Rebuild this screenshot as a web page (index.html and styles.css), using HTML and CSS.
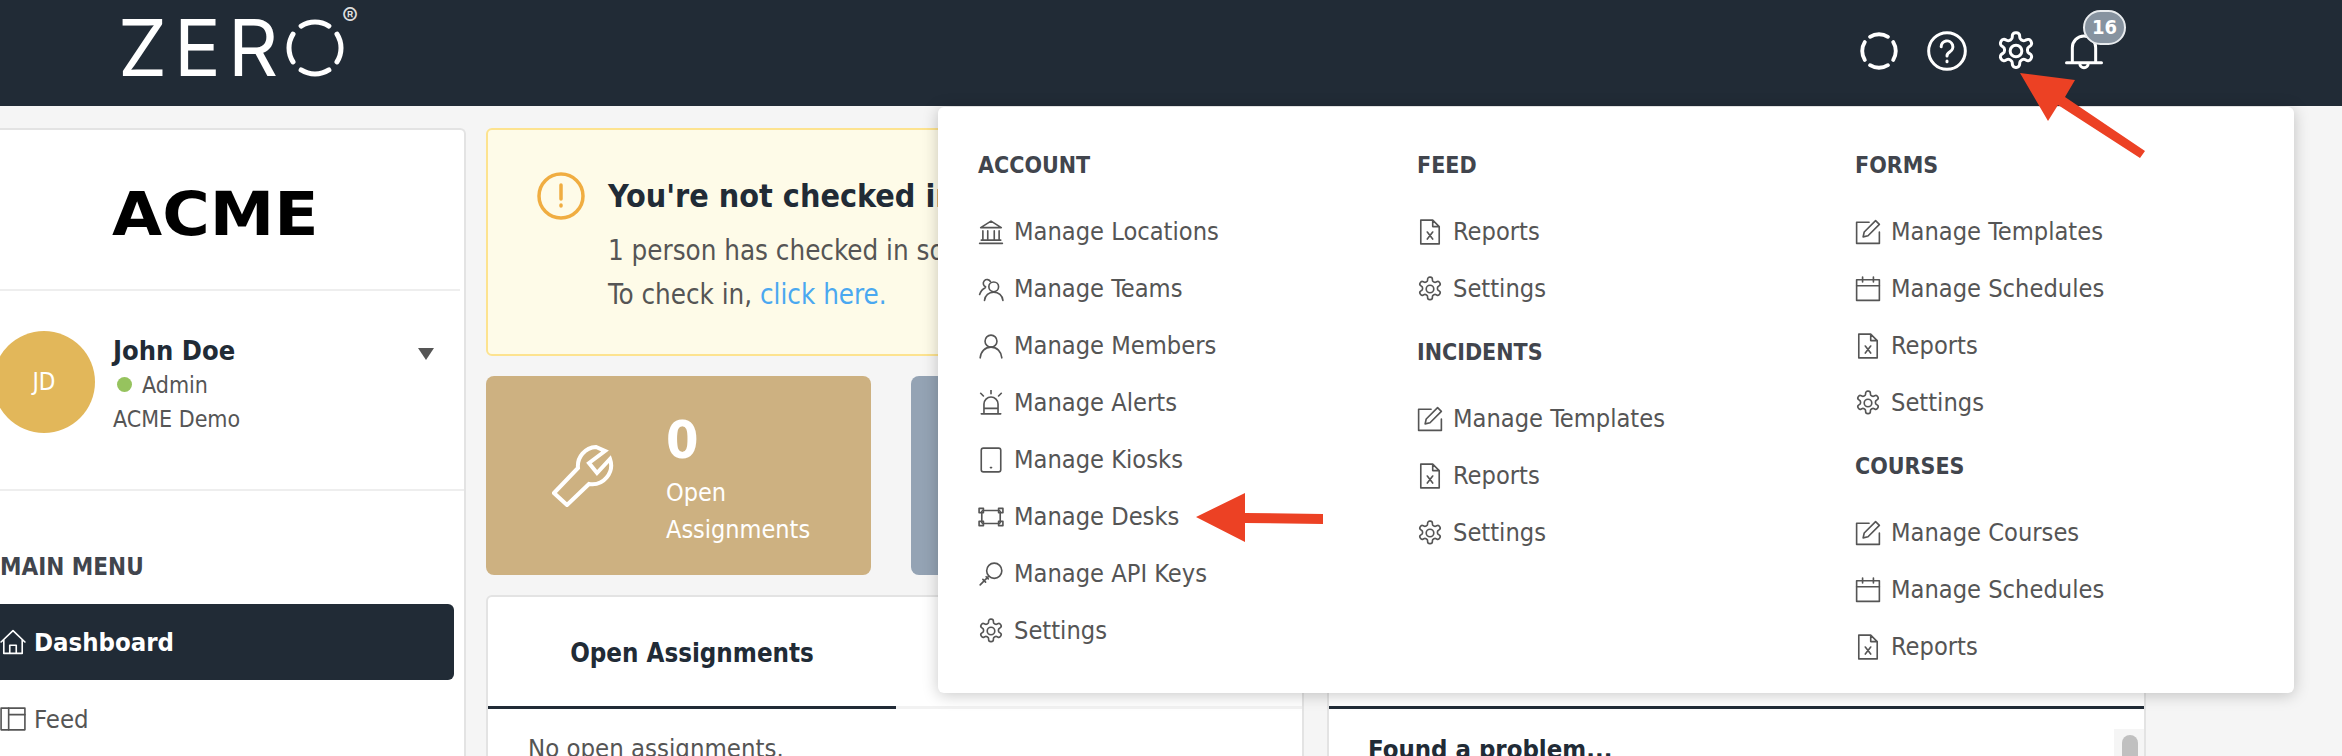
FILE: index.html
```html
<!DOCTYPE html>
<html lang="en">
<head>
	<meta charset="UTF-8">
	<meta name="viewport" content="width=device-width, initial-scale=1.0">
	<title>ZERO Dashboard</title>
	<link rel="stylesheet" href="styles.css">
</head>
<body>
	<svg class="sprite" width="0" height="0">
		<symbol id="i-bank" viewBox="0 0 24 24"><path d="M2.5 8 12 2l9.500 6zM4.500 11v8M9 11v8M15 11v8M19.500 11v8M3 19.500h18M1.500 22.500h21"/></symbol>
		<symbol id="i-team" viewBox="0 0 24 24"><circle cx="14.500" cy="10" r="4.500"/><path d="M6 22.500c.5-4.500 4-7.500 8.500-7.500s8 3 8.500 7.500M11.500 5.200a3.500 3.500 0 1 0-4.500 4.800M6.500 11c-2.500 1-4 3-5 6"/></symbol>
		<symbol id="i-person" viewBox="0 0 24 24"><circle cx="12" cy="7.500" r="5.500"/><path d="M2 23c.5-6 4.500-10 10-10s9.500 4 10 10"/></symbol>
		<symbol id="i-alert" viewBox="0 0 24 24"><path d="M5.500 21v-8a6.500 6.500 0 0 1 13 0v8M3 22h18M12 0v3.500M2.500 3l2.500 2.500M21.500 3 19 5.500M5.500 17h13"/></symbol>
		<symbol id="i-kiosk" viewBox="0 0 24 24"><rect x="3" y="1" width="18" height="22" rx="2"/><path d="M11.500 19h1"/></symbol>
		<symbol id="i-desk" viewBox="0 0 24 24"><path d="M4 6h16M4 18h16M3.500 7v10M20.500 7v10"/><rect x="1" y="4" width="4" height="4"/><rect x="19" y="4" width="4" height="4"/><rect x="1" y="16" width="4" height="4"/><rect x="19" y="16" width="4" height="4"/></symbol>
		<symbol id="i-key" viewBox="0 0 24 24"><circle cx="15" cy="9" r="7"/><path d="M10 14 2 22M4.500 17l2.500 2.500M7.500 14.500l2 2"/></symbol>
		<symbol id="i-gear" viewBox="0 0 24 24"><path d="M12.220 1h-.44a2 2 0 0 0-2 2v.6a2 2 0 0 1-1 1.730l-.43.250a2 2 0 0 1-2 0l-.5-.28a2 2 0 0 0-2.730.730l-.22.380a2 2 0 0 0 .730 2.730l.5.300a2 2 0 0 1 1 1.720v.51a2 2 0 0 1-1 1.740l-.5.290a2 2 0 0 0-.730 2.730l.22.380a2 2 0 0 0 2.730.730l.5-.28a2 2 0 0 1 2 0l.43.250a2 2 0 0 1 1 1.730v.6a2 2 0 0 0 2 2h.44a2 2 0 0 0 2-2v-.6a2 2 0 0 1 1-1.730l.43-.25a2 2 0 0 1 2 0l.5.280a2 2 0 0 0 2.730-.730l.22-.39a2 2 0 0 0-.730-2.730l-.5-.28a2 2 0 0 1-1-1.740v-.5a2 2 0 0 1 1-1.740l.5-.29a2 2 0 0 0 .730-2.730l-.22-.38a2 2 0 0 0-2.730-.730l-.5.280a2 2 0 0 1-2 0l-.43-.25a2 2 0 0 1-1-1.730V3a2 2 0 0 0-2-2z"/><circle cx="12" cy="12" r="3.500"/></symbol>
		<symbol id="i-file" viewBox="0 0 24 24"><path d="M3.500 1h11l6 6v16h-17zM14.500 1v6h6M9.500 12l5 6.500M14.500 12l-5 6.500"/></symbol>
		<symbol id="i-edit" viewBox="0 0 24 24"><path d="M22.500 12v10.500h-21V3H13M19 1.500l3.500 3.500L12 15.500l-4.500 1 1-4.500z"/></symbol>
		<symbol id="i-calendar" viewBox="0 0 24 24"><rect x="1.500" y="3.500" width="21" height="19"/><path d="M1.500 9h21M7 1v4.500M17 1v4.500"/></symbol>
		<symbol id="i-house" viewBox="0 0 24 24"><path d="M1 12 12 1.500 23 12M3.500 10v12.500h17V10M9 22.500V15h6v7.500"/></symbol>
		<symbol id="i-layout" viewBox="0 0 24 24"><rect x="1" y="2" width="22" height="20"/><path d="M8 2v20M8 8h15"/></symbol>
		<symbol id="i-ring" viewBox="0 0 62 62"><circle cx="31" cy="31" r="26" pathLength="100" stroke-dasharray="18 7" stroke-dashoffset="9"/></symbol>
	</svg>

	<header class="topbar">
		<div class="logo">
			<span class="logo-text">ZER</span>
			<svg class="logo-ring"><use href="#i-ring"/></svg>
			<span class="logo-reg">®</span>
		</div>
		<div class="top-icons">
			<svg class="top-icon top-ring"><use href="#i-ring"/></svg>
			<svg class="top-icon" viewBox="0 0 24 24"><circle cx="12" cy="12" r="11"/><path d="M8.500 9.500a3.500 3.500 0 1 1 5.200 3c-1.200.7-1.700 1.300-1.700 2.500M12 18v.5"/></svg>
			<svg class="top-icon"><use href="#i-gear"/></svg>
			<div class="bell">
				<svg class="top-icon" viewBox="0 0 24 24"><path d="M5 18V10a7 7 0 0 1 14 0v8M1.500 19h21M9.500 19.500a2.500 2.500 0 0 0 5 0"/></svg>
				<span class="badge">16</span>
			</div>
		</div>
	</header>

	<div class="layout">
		<aside class="sidebar">
			<div class="brand"><span class="brand-text">ACME</span></div>
			<div class="profile">
				<div class="avatar">JD</div>
				<div class="who">
					<div class="who-name">John Doe</div>
					<div class="who-role"><span class="dot"></span>Admin</div>
					<div>ACME Demo</div>
				</div>
				<span class="caret"></span>
			</div>
			<nav class="side-nav">
				<div class="side-title">MAIN MENU</div>
				<a class="side-link active"><svg class="ico"><use href="#i-house"/></svg>Dashboard</a>
				<a class="side-link"><svg class="ico"><use href="#i-layout"/></svg>Feed</a>
			</nav>
		</aside>

		<main class="main">
			<section class="notice">
				<svg class="notice-icon" viewBox="0 0 48 48"><circle cx="24" cy="24" r="22"/><path d="M24 13v14M24 33v1"/></svg>
				<div class="notice-body">
					<h2 class="notice-title">You're not checked in</h2>
					<p class="notice-text">1 person has checked in so</p>
					<p class="notice-text">To check in, <a class="link">click here.</a></p>
				</div>
			</section>

			<section class="stats">
				<div class="stat stat-tan">
					<svg class="stat-icon" viewBox="0 0 62 62"><path d="M2 48 26 23A19 19 0 0 1 44 2L53 6 37 18 45 28 58 14A19 19 0 0 1 37 39L15 60Z"/></svg>
					<div class="stat-text">
						<div class="stat-num">0</div>
						<div class="stat-label">Open<br>Assignments</div>
					</div>
				</div>
				<div class="stat stat-blue"></div>
			</section>

			<section class="panels">
				<div class="panel">
					<div class="tabs"><div class="tab">Open Assignments</div></div>
					<div class="panel-body">No open assignments.</div>
				</div>
				<div class="panel">
					<div class="tabs tabs-dark"></div>
					<div class="panel-body panel-scroll">
						<strong class="panel-strong">Found a problem...</strong>
						<div class="scroll"><span class="thumb"></span></div>
					</div>
				</div>
			</section>
		</main>
	</div>

	<div class="dropdown">
		<div class="drop-col">
			<h3 class="drop-title">ACCOUNT</h3>
			<a class="drop-link"><svg class="ico"><use href="#i-bank"/></svg>Manage Locations</a>
			<a class="drop-link"><svg class="ico"><use href="#i-team"/></svg>Manage Teams</a>
			<a class="drop-link"><svg class="ico"><use href="#i-person"/></svg>Manage Members</a>
			<a class="drop-link"><svg class="ico"><use href="#i-alert"/></svg>Manage Alerts</a>
			<a class="drop-link"><svg class="ico"><use href="#i-kiosk"/></svg>Manage Kiosks</a>
			<a class="drop-link"><svg class="ico"><use href="#i-desk"/></svg>Manage Desks</a>
			<a class="drop-link"><svg class="ico"><use href="#i-key"/></svg>Manage API Keys</a>
			<a class="drop-link"><svg class="ico"><use href="#i-gear"/></svg>Settings</a>
		</div>
		<div class="drop-col">
			<h3 class="drop-title">FEED</h3>
			<a class="drop-link"><svg class="ico"><use href="#i-file"/></svg>Reports</a>
			<a class="drop-link"><svg class="ico"><use href="#i-gear"/></svg>Settings</a>
			<h3 class="drop-title drop-next">INCIDENTS</h3>
			<a class="drop-link"><svg class="ico"><use href="#i-edit"/></svg>Manage Templates</a>
			<a class="drop-link"><svg class="ico"><use href="#i-file"/></svg>Reports</a>
			<a class="drop-link"><svg class="ico"><use href="#i-gear"/></svg>Settings</a>
		</div>
		<div class="drop-col">
			<h3 class="drop-title">FORMS</h3>
			<a class="drop-link"><svg class="ico"><use href="#i-edit"/></svg>Manage Templates</a>
			<a class="drop-link"><svg class="ico"><use href="#i-calendar"/></svg>Manage Schedules</a>
			<a class="drop-link"><svg class="ico"><use href="#i-file"/></svg>Reports</a>
			<a class="drop-link"><svg class="ico"><use href="#i-gear"/></svg>Settings</a>
			<h3 class="drop-title drop-next">COURSES</h3>
			<a class="drop-link"><svg class="ico"><use href="#i-edit"/></svg>Manage Courses</a>
			<a class="drop-link"><svg class="ico"><use href="#i-calendar"/></svg>Manage Schedules</a>
			<a class="drop-link"><svg class="ico"><use href="#i-file"/></svg>Reports</a>
		</div>
	</div>

	<svg class="marks" viewBox="0 0 2342 756">
		<polygon points="2020,73 2075,80 2065,97 2145,151 2140,158 2058,105 2048,121"/>
		<polygon points="1196,517 1245,493 1245,513 1323,514 1323,524 1245,523 1245,542"/>
	</svg>
</body>
</html>
```

FILE: styles.css
```css
* {
	box-sizing: border-box;
}
body {
	margin: 0;
	height: 756px;
	overflow: hidden;
	background: #f5f5f5;
	color: #555;
	font-family: "DejaVu Sans Condensed", "DejaVu Sans", sans-serif;
	font-size: 25px;
	position: relative;
}
.sprite {
	position: absolute;
}
symbol {
	overflow: visible;
}

/* top bar */
.topbar {
	height: 106px;
	background: #212b36;
	display: flex;
	align-items: center;
	justify-content: space-between;
	padding: 0 238px 0 118px;
}
.logo {
	display: flex;
	align-items: center;
	position: relative;
	height: 106px;
	margin-top: -10px;
}
.logo-text {
	font-family: Inter, sans-serif;
	font-weight: 400;
	font-size: 78px;
	color: #fff;
	letter-spacing: 7px;
	line-height: 1;
}
.logo-ring {
	width: 62px;
	height: 62px;
	fill: none;
	stroke: #fff;
	stroke-width: 5;
	stroke-linecap: round;
	margin-left: -1px;
}
.logo-reg {
	position: absolute;
	left: 224px;
	top: 10px;
	color: #ddd;
	font-family: Inter, sans-serif;
	font-size: 24px;
	line-height: 1;
}
.top-icons {
	display: flex;
	align-items: center;
	gap: 28.500px;
	margin-top: -4px;
}
.top-icon {
	width: 40px;
	height: 40px;
	fill: none;
	stroke: #fff;
	stroke-width: 1.800;
	stroke-linecap: round;
	stroke-linejoin: round;
}
.top-ring {
	stroke-width: 6;
}
.bell {
	position: relative;
	display: flex;
}
.badge {
	position: absolute;
	left: 19px;
	top: -21px;
	width: 43px;
	height: 35px;
	border-radius: 18px;
	border: 2px solid #e8ebee;
	background: #8793a0;
	color: #fff;
	font-weight: bold;
	font-size: 20px;
	line-height: 31px;
	text-align: center;
}

/* page layout */
.layout {
	display: flex;
	gap: 20px;
	margin-left: -24px;
	padding-top: 22px;
	height: 650px;
}
.sidebar {
	width: 490px;
	flex: none;
	background: #fff;
	border: 2px solid #e3e3e3;
	border-bottom: 0;
	border-radius: 6px 6px 0 0;
}
.brand {
	height: 161px;
	margin-right: 4px;
	border-bottom: 2px solid #eee;
	display: flex;
	align-items: center;
	padding-left: 134px;
}
.brand-text {
	font-family: "DejaVu Sans", sans-serif;
	font-weight: bold;
	font-size: 60px;
	color: #000;
	line-height: 1;
	margin-top: 9px;
	transform: scaleX(1.08);
	transform-origin: left center;
}
.profile {
	height: 200px;
	border-bottom: 2px solid #eee;
	display: flex;
	align-items: center;
	padding: 0 30px 0 15px;
	gap: 18px;
}
.avatar {
	width: 102px;
	height: 102px;
	border-radius: 50%;
	background: #e2b75a;
	color: #fff;
	font-size: 24px;
	display: flex;
	align-items: center;
	justify-content: center;
	flex: none;
	margin-top: -17px;
}
.who {
	flex: 1;
	font-size: 23px;
	line-height: 34px;
	margin-top: -11px;
}
.who-name {
	font-weight: bold;
	font-size: 27px;
	color: #212b36;
}
.who-role {
	display: flex;
	align-items: center;
	gap: 10px;
	padding-left: 4px;
}
.dot {
	width: 15px;
	height: 15px;
	border-radius: 50%;
	background: #96c35e;
}
.caret {
	width: 0;
	height: 0;
	border-left: 8px solid transparent;
	border-right: 8px solid transparent;
	border-top: 12px solid #555;
	margin-top: -72px;
}
.side-nav {
	padding: 61px 10px 0 22px;
}
.side-title {
	font-weight: bold;
	font-size: 24px;
	color: #41454d;
	line-height: 30px;
	margin-bottom: 22px;
}
.side-link {
	display: flex;
	align-items: center;
	gap: 8px;
	height: 77px;
	font-size: 25.500px;
}
.active {
	height: 76px;
	margin-left: -22px;
	padding-left: 22px;
	background: #212b36;
	color: #fff;
	font-weight: bold;
	border-radius: 6px;
}

/* main column */
.main {
	width: 1660px;
	flex: none;
	display: flex;
	flex-direction: column;
	gap: 20px;
}
.notice {
	height: 228px;
	flex: none;
	background: #fefbe8;
	border: 2px solid #fde38f;
	border-radius: 6px;
	display: flex;
	gap: 23px;
	padding: 42px 0 0 49px;
}
.notice-icon {
	width: 48px;
	height: 48px;
	flex: none;
	fill: none;
	stroke: #f0ad41;
	stroke-width: 3.500;
	stroke-linecap: round;
}
.notice-body {
	white-space: nowrap;
}
.notice-title {
	margin: 0 0 8px;
	font-size: 32px;
	line-height: 48px;
	color: #212b36;
}
.notice-text {
	margin: 0;
	font-size: 27.500px;
	line-height: 44px;
}
.link {
	color: #4aa8f0;
}
.stats {
	display: flex;
	flex: none;
	gap: 40px;
}
.stat {
	width: 385px;
	height: 199px;
	border-radius: 8px;
	color: #fff;
	display: flex;
	align-items: center;
	gap: 52px;
	padding-left: 66px;
}
.stat-tan {
	background: #cdb181;
}
.stat-blue {
	background: #94a3b4;
}
.stat-icon {
	width: 62px;
	height: 62px;
	flex: none;
	fill: none;
	stroke: #fff;
	stroke-width: 4;
}
.stat-text {
	margin-top: 7px;
}
.stat-num {
	font-weight: bold;
	font-size: 52px;
	line-height: 58px;
	margin-bottom: 5px;
}
.stat-label {
	font-size: 25px;
	line-height: 37px;
}
.panels {
	display: grid;
	grid-template-columns: 818px 819px;
	gap: 23px;
	flex: 1;
}
.panel {
	background: #fff;
	border: 2px solid #e3e3e3;
	border-bottom: 0;
	border-radius: 6px 6px 0 0;
}
.tabs {
	height: 112px;
	border-bottom: 3px solid #f2f2f2;
}
.tabs-dark {
	border-bottom-color: #212b36;
}
.tab {
	width: 408px;
	height: 112px;
	border-bottom: 3px solid #212b36;
	font-weight: bold;
	font-size: 25.700px;
	color: #212b36;
	text-align: center;
	line-height: 112px;
}
.panel-body {
	padding: 23px 40px 0;
	font-size: 25.500px;
	line-height: 32px;
}
.panel-scroll {
	position: relative;
	display: flex;
	padding-top: 24px;
	padding-left: 39px;
}
.panel-strong {
	color: #212b36;
	font-size: 25.500px;
}
.scroll {
	position: absolute;
	top: 20px;
	right: 0;
	width: 30px;
	height: 40px;
	background: #f5f5f5;
	padding: 6px 6px 0 8px;
}
.thumb {
	display: block;
	height: 40px;
	border-radius: 8px;
	background: #c0c0c0;
}

/* settings dropdown */
.dropdown {
	position: absolute;
	left: 938px;
	top: 107px;
	width: 1356px;
	height: 586px;
	background: #fff;
	border-radius: 6px;
	box-shadow: 0 2px 16px rgba(0, 0, 0, 0.22);
	display: grid;
	grid-template-columns: 439px 438px 439px;
	padding: 43px 0 0 40px;
}
.drop-title {
	margin: 0 0 23px;
	font-size: 23px;
	line-height: 30px;
	color: #41454d;
}
.drop-next {
	margin-top: 20px;
}
.drop-link {
	display: flex;
	align-items: center;
	gap: 10px;
	height: 57px;
	font-size: 25.200px;
}
.ico {
	width: 26px;
	height: 26px;
	flex: none;
	fill: none;
	stroke: currentColor;
	stroke-width: 1.500;
	stroke-linejoin: round;
	stroke-linecap: round;
}

/* annotation arrows */
.marks {
	position: absolute;
	left: 0;
	top: 0;
	width: 2342px;
	height: 756px;
	fill: #ec4124;
}
```
